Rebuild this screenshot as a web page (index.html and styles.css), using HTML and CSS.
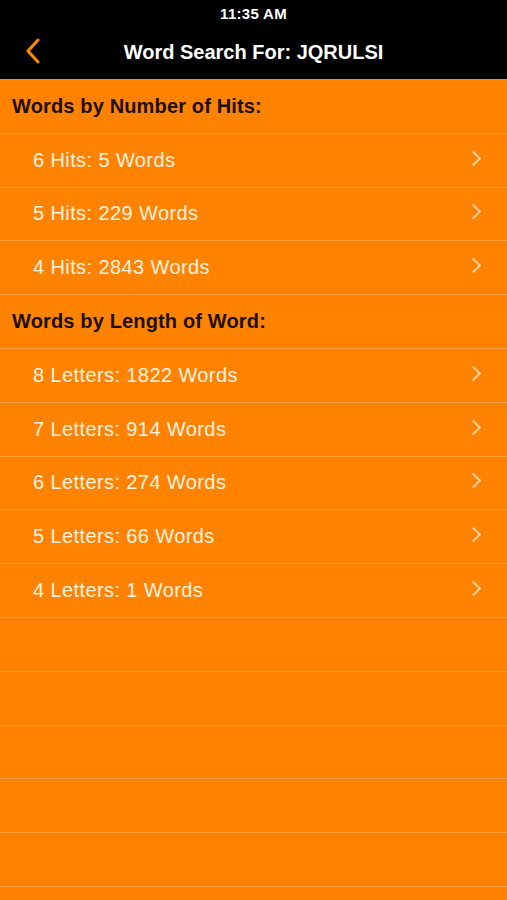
FILE: index.html
```html
<!DOCTYPE html>
<html>
<head>
    <title>Word Search For: JQRULSI</title>
    <link rel="stylesheet" href="styles.css">
</head>
<body>
    <div class="topbar">
        <div class="status">11:35 AM</div>
        <div class="nav">
            <svg class="back" width="16" height="26" viewBox="0 0 16 26">
                <path d="M13 2 L3 13 L13 24" fill="none" stroke="#ff8a00" stroke-width="3" stroke-linecap="round" stroke-linejoin="round"/>
            </svg>
            <div class="title">Word Search For: JQRULSI</div>
        </div>
    </div>
    <div class="list">
        <div class="section">Words by Number of Hits:</div>
        <div class="row"><span>6 Hits: 5 Words</span><span class="chev"></span></div>
        <div class="row"><span>5 Hits: 229 Words</span><span class="chev"></span></div>
        <div class="row"><span>4 Hits: 2843 Words</span><span class="chev"></span></div>
        <div class="section">Words by Length of Word:</div>
        <div class="row"><span>8 Letters: 1822 Words</span><span class="chev"></span></div>
        <div class="row"><span>7 Letters: 914 Words</span><span class="chev"></span></div>
        <div class="row"><span>6 Letters: 274 Words</span><span class="chev"></span></div>
        <div class="row"><span>5 Letters: 66 Words</span><span class="chev"></span></div>
        <div class="row"><span>4 Letters: 1 Words</span><span class="chev"></span></div>
        <div class="row empty"></div>
        <div class="row empty"></div>
        <div class="row empty"></div>
        <div class="row empty"></div>
        <div class="row empty"></div>
        <div class="row empty"></div>
    </div>
</body>
</html>
```

FILE: styles.css
```css
body {
    margin: 0;
    font-family: "Liberation Sans", Arial, sans-serif;
    background-color: #ff8200;
    height: 900px;
    overflow: hidden;
}

.topbar {
    background-color: #000;
    height: 79px;
    color: #fff;
}

.status {
    text-align: center;
    font-size: 15px;
    font-weight: bold;
    letter-spacing: 0.3px;
    padding-top: 5px;
    height: 23px;
}

.nav {
    position: relative;
    height: 51px;
    display: flex;
    align-items: center;
    justify-content: center;
}

.back {
    position: absolute;
    left: 25px;
    top: 10px;
}

.title {
    font-size: 20px;
    font-weight: bold;
    margin-top: -2px;
}

.list {
    border-top: 1px solid #ff8a10;
}

.section,
.row {
    box-sizing: border-box;
    height: 53.8px;
    border-bottom: 1px solid #ff9d3a;
    display: flex;
    align-items: center;
}

.section {
    padding-left: 12px;
    font-size: 20px;
    font-weight: bold;
    letter-spacing: 0.15px;
    color: #1a1000;
}

.row {
    padding-left: 33px;
    padding-right: 28px;
    font-size: 20px;
    letter-spacing: 0.4px;
    color: #fff3e2;
    justify-content: space-between;
}

.chev {
    width: 9px;
    height: 9px;
    border-top: 2px solid #f6cf9c;
    border-right: 2px solid #f6cf9c;
    transform: rotate(45deg);
    margin-top: -4px;
}
```
